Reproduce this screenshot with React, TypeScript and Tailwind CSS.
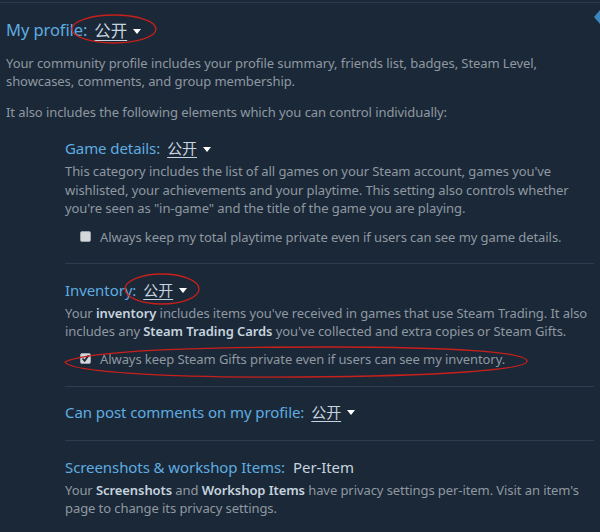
import React from "react";

const Drop = ({ label = "公开" }: { label?: string }) => (
  <span className="inline-flex items-center ml-[7px] text-[#c6d4df]">
    <span className="underline decoration-[#c6d4df] underline-offset-[3px] font-['Noto_Sans_CJK_SC',sans-serif]">{label}</span>
    <svg width="8" height="5" viewBox="0 0 8 5" className="ml-[6px] mt-[2px]">
      <path d="M0 0 L8 0 L4 5 Z" fill="#ffffff" />
    </svg>
  </span>
);

const Box = ({ checked = false }: { checked?: boolean }) => (
  <span className="inline-flex w-[11px] h-[11px] rounded-[2px] bg-[#d4d8dc] border border-[#9aa3ab] items-center justify-center mr-[9px] shrink-0">
    {checked && (
      <svg width="9" height="9" viewBox="0 0 9 9">
        <path d="M1.5 4.5 L3.6 6.8 L7.6 1.5" stroke="#1b2838" strokeWidth="1.8" fill="none" />
      </svg>
    )}
  </span>
);

export default function App() {
  return (
    <div className="relative w-[600px] h-[532px] overflow-hidden bg-[#1b2838] font-['Noto_Sans','Noto_Sans_CJK_SC',sans-serif] text-[13px] tracking-[-0.08px] text-[#8f98a0]">
      <div className="mt-[2px] h-px bg-[#2c3b4d]" />
      <div className="pl-[6px] pr-[6px]">
        <div className="mt-[15px] text-[16.5px] leading-[24px] text-[#5fade0] flex items-center">
          <span>My profile:</span>
          <Drop />
        </div>
        <p className="mt-[12px] leading-[18px]">
          Your community profile includes your profile summary, friends list, badges, Steam Level, showcases, comments, and group membership.
        </p>
        <p className="mt-[13px] leading-[18px]">It also includes the following elements which you can control individually:</p>

        <div className="pl-[59px]">
          <div className="mt-[16px] text-[15px] leading-[22px] text-[#5fade0] flex items-center">
            <span>Game details:</span>
            <Drop />
          </div>
          <p className="mt-[3px] leading-[18.5px] pr-[20px]">
            This category includes the list of all games on your Steam account, games you've wishlisted, your achievements and your playtime. This setting also controls whether you're seen as "in-game" and the title of the game you are playing.
          </p>
          <div className="mt-[10px] pl-[15px] flex items-center leading-[18px]">
            <Box />
            <span>Always keep my total playtime private even if users can see my game details.</span>
          </div>
          <div className="mt-[17px] h-px bg-[#2d3c4e]" />

          <div className="mt-[15px] text-[15px] leading-[22px] text-[#5fade0] flex items-center">
            <span>Inventory:</span>
            <Drop />
          </div>
          <p className="mt-[3px] leading-[18px]">
            Your <b className="font-semibold text-[#c6d4df]">inventory</b> includes items you've received in games that use Steam Trading. It also includes any{" "}
            <b className="font-semibold text-[#c6d4df]">Steam Trading Cards</b> you've collected and extra copies or Steam Gifts.
          </p>
          <div className="mt-[10px] pl-[15px] flex items-center leading-[18px]">
            <Box checked />
            <span>Always keep Steam Gifts private even if users can see my inventory.</span>
          </div>
          <div className="mt-[18px] h-px bg-[#2d3c4e]" />

          <div className="mt-[14px] text-[15px] leading-[22px] text-[#5fade0] flex items-center">
            <span>Can post comments on my profile:</span>
            <Drop />
          </div>
          <div className="mt-[17px] h-px bg-[#2d3c4e]" />

          <div className="mt-[15px] text-[15px] leading-[22px] text-[#5fade0] flex items-center">
            <span>Screenshots &amp; workshop Items:</span>
            <span className="ml-[8px] text-[#c6d4df]">Per-Item</span>
          </div>
          <p className="mt-[3px] leading-[18px] pr-[10px]">
            Your <b className="font-semibold text-[#c6d4df]">Screenshots</b> and <b className="font-semibold text-[#c6d4df]">Workshop Items</b> have privacy settings per-item. Visit an item's page to change its privacy settings.
          </p>
        </div>
      </div>

      <div className="absolute right-0 top-[10px] w-0 h-0 border-y-[7px] border-y-transparent border-r-[6px] border-r-[#3b86bd]" />

      <svg className="absolute inset-0 pointer-events-none" width="600" height="532">
        <ellipse cx="114" cy="29" rx="42" ry="14" fill="none" stroke="#c8201a" strokeWidth="1.3" />
        <ellipse cx="162" cy="289" rx="37" ry="15" fill="none" stroke="#c8201a" strokeWidth="1.3" />
        <path d="M65 362 C 90 350, 200 347, 330 347 C 450 347, 527 352, 527 361 C 527 370, 440 376, 300 377 C 170 378, 70 372, 65 362 Z" fill="none" stroke="#c8201a" strokeWidth="1.3" />
      </svg>
    </div>
  );
}
